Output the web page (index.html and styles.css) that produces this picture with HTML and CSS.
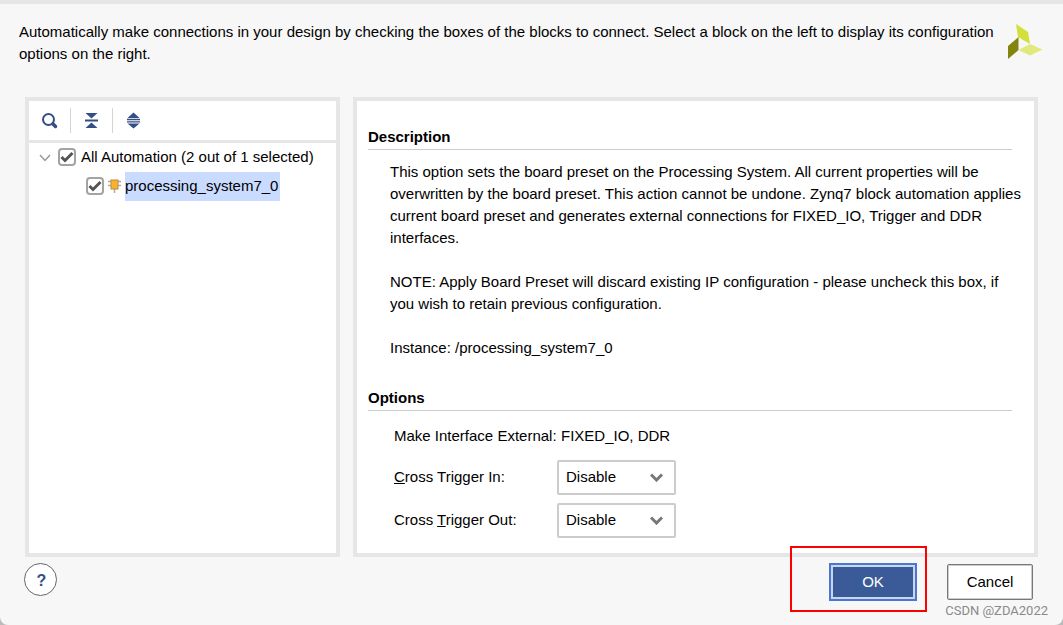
FILE: index.html
```html
<!DOCTYPE html>
<html lang="en">
<head>
<meta charset="utf-8">
<title>Run Block Automation</title>
<link rel="stylesheet" href="styles.css">
</head>
<body>
<main class="dialog">
  <header class="header">
    <p class="intro">Automatically make connections in your design by checking the boxes of the blocks to connect. Select a block on the left to display its configuration options on the right.</p>
    <svg class="logo" viewBox="0 0 36 36" aria-hidden="true">
      <path d="M9 0 21 8 23 20 11 13Z" fill="#d3e03b"/>
      <path d="M11.500 13V26L1 35V22Z" fill="#82850d"/>
      <path d="M11.500 26 23 20 35.500 25.500 23 31.500Z" fill="#e2e97c"/>
    </svg>
  </header>

  <div class="panels">
    <section class="panel tree-panel">
      <div class="toolbar">
        <button class="tool" type="button" aria-label="Search">
          <svg width="17" height="17" viewBox="0 0 17 17"><circle cx="7.500" cy="7.500" r="5.500" fill="none" stroke="#344f87" stroke-width="2"/><path d="M12 12 14.500 14.500" stroke="#344f87" stroke-width="3.500" stroke-linecap="round"/></svg>
        </button>
        <button class="tool" type="button" aria-label="Collapse all">
          <svg width="13" height="17" viewBox="0 0 13 17"><path d="M.5 1H12.500L6.500 6.500ZM0 7.500H13V9.500H0ZM6.500 10.500 12.500 16H.5Z" fill="#344f87"/></svg>
        </button>
        <button class="tool" type="button" aria-label="Expand all">
          <svg width="13" height="17" viewBox="0 0 13 17"><path d="M6.500 .5 12.500 6H.5ZM0 6.800H13V8.200H0ZM0 9.200H13V10.600H0ZM.5 11.500H12.500L6.500 16.500Z" fill="#344f87"/></svg>
        </button>
      </div>
      <div class="tree">
        <div class="row">
          <svg class="twisty" width="12" height="8" viewBox="0 0 12 8" aria-hidden="true"><path d="M1 1 6 6.500 11 1" fill="none" stroke="#999" stroke-width="1.500"/></svg>
          <input class="check" type="checkbox" id="all" checked>
          <label class="row-label" for="all">All Automation (2 out of 1 selected)</label>
        </div>
        <div class="row child">
          <input class="check" type="checkbox" id="ps7" checked>
          <svg class="chip" width="13" height="14" viewBox="0 0 13 14" aria-hidden="true"><path d="M0 2.500H13M0 6.500H13M6.500 9V14" stroke="#aaa" stroke-width="1.500"/><rect x="3" y="1" width="7" height="9" fill="#fcb12d" stroke="#b88c42"/></svg>
          <label class="row-label selected" for="ps7">processing_system7_0</label>
        </div>
      </div>
    </section>

    <section class="panel detail-panel">
      <h2 class="heading">Description</h2>
      <div class="description">
        <p class="para">This option sets the board preset on the Processing System. All current properties will be overwritten by the board preset. This action cannot be undone. Zynq7 block automation applies current board preset and generates external connections for FIXED_IO, Trigger and DDR interfaces.</p>
        <p class="para">NOTE: Apply Board Preset will discard existing IP configuration - please uncheck this box, if you wish to retain previous configuration.</p>
        <p class="para">Instance: /processing_system7_0</p>
      </div>
      <h2 class="heading">Options</h2>
      <div class="options">
        <span class="value">Make Interface External:</span><span class="value indent">FIXED_IO, DDR</span>
        <label class="option-label" for="in"><u>C</u>ross Trigger In:</label>
        <select class="select" id="in"><option>Disable</option></select>
        <label class="option-label" for="out">Cross <u>T</u>rigger Out:</label>
        <select class="select" id="out"><option>Disable</option></select>
      </div>
    </section>
  </div>

  <footer class="footer">
    <button class="help" type="button" aria-label="Help">?</button>
    <div class="actions">
      <div class="marked"><button class="button primary" type="button">OK</button></div>
      <button class="button" type="button">Cancel</button>
    </div>
    <span class="watermark">CSDN @ZDA2022</span>
  </footer>
</main>
</body>
</html>
```
FILE: styles.css
```css
* {
  box-sizing: border-box;
}

body {
  margin: 0;
  background: #bbb;
  color: #000;
  font: 15px/22px "Liberation Sans", Arial, sans-serif;
}

button,
select {
  font: inherit;
  color: inherit;
}

p,
h2 {
  margin: 0;
}

.dialog {
  display: flex;
  flex-direction: column;
  min-height: 100vh;
  border-top: 4px solid #e6e6e6;
  border-radius: 0 0 8px 8px;
  background: #f7f7f7;
}

.header {
  display: flex;
  justify-content: space-between;
  gap: 12px;
  padding: 17px 20px 32px 19px;
}

.intro {
  max-width: 976px;
}

.logo {
  flex: none;
  width: 36px;
  height: 36px;
  margin-top: 3px;
}

.panels {
  flex: 1;
  display: flex;
  gap: 13px;
  padding: 0 25px;
}

.panel {
  border: 4px solid #e6e6e6;
  background: #fff;
}

.tree-panel {
  flex: 0 0 315px;
}

.toolbar {
  display: flex;
  align-items: center;
  height: 42px;
  border-bottom: 3px solid #e6e6e6;
}

.tool {
  display: grid;
  place-items: center;
  width: 42px;
  height: 25px;
  padding: 0;
  border: 0;
  border-right: 1px solid #d4d4d4;
  background: none;
}

.tool:last-child {
  border-color: transparent;
}

.row {
  display: flex;
  align-items: center;
  height: 29px;
  padding-left: 10px;
}

.twisty {
  margin: 0 7px 0 0;
}

.child {
  padding-left: 57px;
}

.check {
  appearance: none;
  flex: none;
  width: 18px;
  height: 18px;
  margin: 0 0 2px;
  border: 2px solid #a3a3a3;
  border-radius: 4px;
  background: #fff;
}

.check:checked {
  background: #fff url("data:image/svg+xml,%3Csvg xmlns='http://www.w3.org/2000/svg' viewBox='0 0 14 14'%3E%3Cpath d='M1.500 7 5 10.500 12.500 3' fill='none' stroke='%23555' stroke-width='3'/%3E%3C/svg%3E") center / 14px no-repeat;
}

.chip {
  margin: 0 0 2px 4px;
}

.row-label {
  margin-left: 5px;
  padding-bottom: 2px;
  line-height: 27px;
}

.selected {
  margin-left: 4px;
  padding-right: 2px;
  background: #c9dcff;
}

.detail-panel {
  flex: 1;
  padding: 25px 12px 15px 11px;
}

.heading {
  margin-right: 10px;
  border-bottom: 1px solid #ccc;
  padding-bottom: 1px;
  font-size: 15px;
  line-height: 22px;
}

.description {
  display: grid;
  gap: 22px;
  padding: 11px 0 28px 22px;
}

.options {
  display: grid;
  grid-template-columns: 163px 119px;
  align-items: center;
  row-gap: 8px;
  padding: 9px 0 0 26px;
}

.value {
  padding: 5px 0;
  white-space: nowrap;
}

.indent {
  padding-left: 4px;
}

.option-label {
  padding-bottom: 2px;
}

.select {
  appearance: none;
  height: 35px;
  padding: 0 28px 2px 7px;
  border: 2px solid #ccc;
  border-radius: 2px;
  background: #fff url("data:image/svg+xml,%3Csvg xmlns='http://www.w3.org/2000/svg' viewBox='0 0 13 9'%3E%3Cpath d='M1 1.500 6.500 7 12 1.500' fill='none' stroke='%23777' stroke-width='3'/%3E%3C/svg%3E") right 11px center / 13px 9px no-repeat;
}

.footer {
  position: relative;
  display: flex;
  justify-content: space-between;
  padding: 6px 30px 24px 24px;
}

.help {
  width: 33px;
  height: 33px;
  padding: 2px 0 0 2px;
  border: 1px solid #666;
  border-radius: 50%;
  background: #fff;
  color: #344f87;
  font-weight: bold;
  font-size: 16px;
}

.actions {
  display: flex;
  align-items: center;
  gap: 30px;
}

.marked {
  position: relative;
}

.marked::after {
  content: "";
  position: absolute;
  inset: -17px -10px -11px -39px;
  border: 2px solid #f00;
  pointer-events: none;
}

.button {
  display: block;
  width: 86px;
  height: 36px;
  padding: 0;
  border: 1px solid #777;
  border-radius: 2px;
  background: #fff;
  box-shadow: inset 0 0 0 1px #ccc;
}

.primary {
  width: 88px;
  height: 38px;
  border: 2px solid #4a77cf;
  border-radius: 0;
  background: #3b5b98;
  color: #fff;
  box-shadow: inset 0 0 0 2px #c9d6ef;
}

.watermark {
  position: absolute;
  right: 15px;
  bottom: 4px;
  color: #8a8a8a;
  font: 13px/20px Roboto, sans-serif;
}
```
